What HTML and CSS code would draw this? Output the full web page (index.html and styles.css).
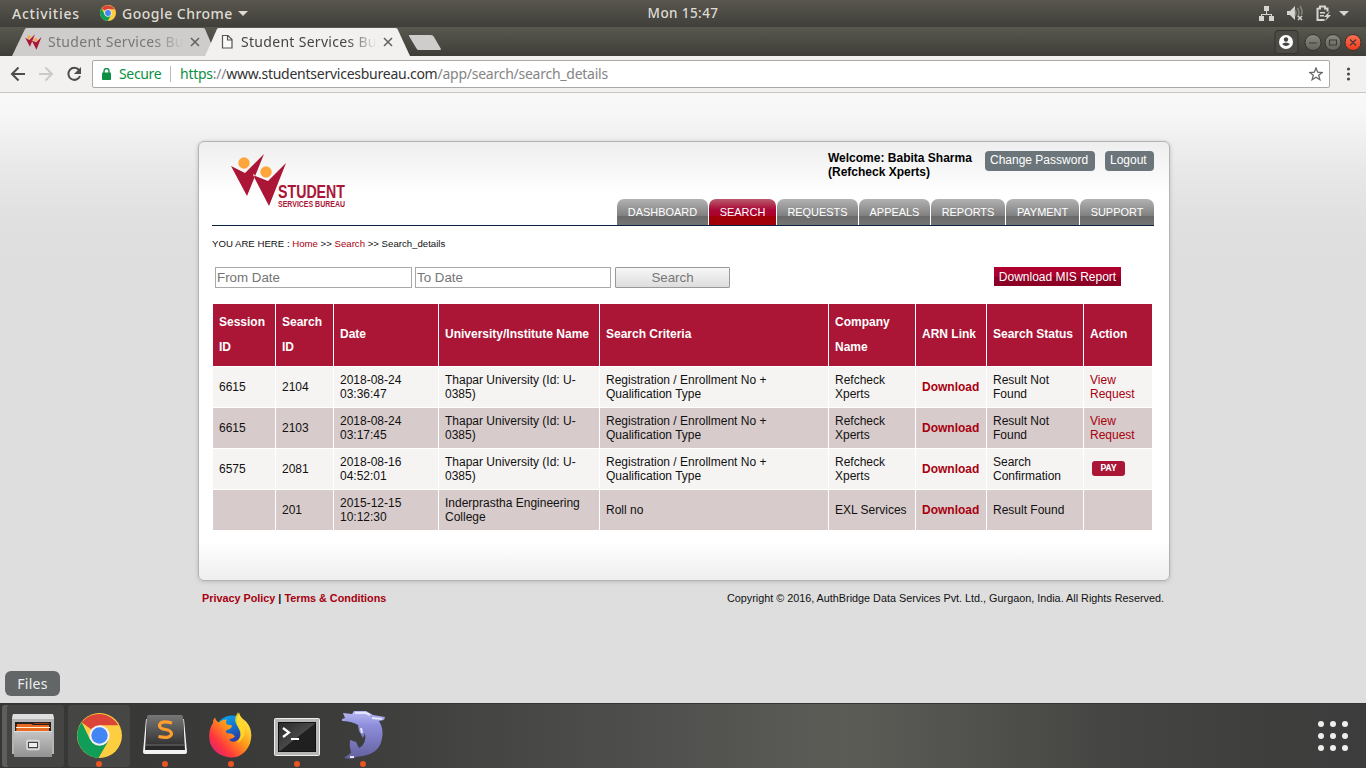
FILE: index.html
```html
<!DOCTYPE html>
<html lang="en">
<head>
<meta charset="utf-8">
<title>Student Services Bureau</title>
<link rel="stylesheet" href="styles.css">
</head>
<body>
<svg width="0" height="0" class="defs" aria-hidden="true">
  <defs>
    <symbol id="chrome" viewBox="0 0 44 44">
      <circle cx="22" cy="22" r="22" fill="#ffcd40"/>
      <path d="M22 22 4.500 9A22 22 0 0 1 40.500 12H22Z" fill="#db4437"/>
      <path d="M4.500 9A22 22 0 0 0 21 44L30.500 27.500 22 22 13 26.500Z" fill="#0f9d58"/>
      <circle cx="22" cy="22" r="10" fill="#f1f1f1"/>
      <circle cx="22" cy="22" r="8" fill="#4285f4"/>
    </symbol>
    <symbol id="figures" viewBox="0 0 56 54">
      <path d="M0 13 14 20 33 1 16 43Z" fill="#ab1536"/>
      <path d="M22 22 37 28 55 10 38 53Z" fill="#ab1536"/>
      <circle cx="13" cy="10" r="5.700" fill="#fea63c"/>
      <circle cx="35" cy="19" r="5.700" fill="#fea63c"/>
      <path d="M22 21l2 1-1 2Z" fill="#f6f6f6"/>
    </symbol>
  </defs>
</svg>

<header class="topbar">
  <span class="activities">Activities</span>
  <svg class="top-chrome" width="16" height="16"><use href="#chrome"/></svg>
  <span class="appname">Google Chrome</span>
  <i class="caret"></i>
  <span class="clock">Mon 15:47</span>
  <svg class="tray" width="94" height="18" viewBox="0 0 94 18" fill="#d5d4d0">
    <path d="M6 2h5v5H6zM1 12h5v5H1zM11 12h5v5h-5zM8 7h1v3h5v2h-1v-1H4v1H3v-2h5z"/>
    <path d="M29 7h3l5-5v14l-5-5h-3z"/>
    <g fill="none" stroke="#85837c" stroke-width="1.500"><path d="M37 6q2 3 0 6M39.500 4q3 5 0 9M42 2q3 5 1.500 9"/></g>
    <path d="m40 12 4 4m0-4-4 4" stroke="#d5d4d0" stroke-width="1.500"/>
    <path d="M59.500 4.500h2.500v-2h5v2h2.500v3M59.500 4v12h7" fill="none" stroke="#d5d4d0" stroke-width="2"/>
    <path d="M62 8h5v1.500h-5zM62 11h4v1.500h-4zM72 7l-6 6h3l-2 4 6-6h-3z"/>
    <path d="M81 7h10l-5 5z"/>
  </svg>
</header>

<div class="tabstrip">
  <svg class="tab-shapes" width="450" height="29" viewBox="0 0 450 29">
    <path d="M12 29 25 2q.500-1 2-1H203q1.500 0 2 1l6 14-5 13Z" fill="#cfcdcb"/>
    <path d="M205 29 217 2q.500-1 2-1H395q2 0 2.500 1L410 29Z" fill="#f2f1f0"/>
    <path d="M409 8H431q2 0 3 2l7 12q0 1-1 1H419q-2 0-2.500-1.500L409 9Z" fill="#cfcdcb"/>
    <path d="m191 11 8 8m0-8-8 8M384 11l8 8m0-8-8 8" stroke="#646464" stroke-width="1.600"/>
    <path d="M222.500 8.500h5.500l4 4v8.500h-9.500ZM227.500 8.500V13h4.500" fill="#fafafa" stroke="#555" stroke-width="1.200"/>
  </svg>
  <svg class="favicon" width="17" height="16"><use href="#figures"/></svg>
  <span class="tab-title inactive">Student Services Bu</span>
  <span class="tab-title active">Student Services Bu</span>
  <svg class="window-buttons" width="94" height="28" viewBox="0 0 94 28">
    <defs>
      <linearGradient id="grey-button" x2="0" y2="1"><stop stop-color="#8b8980"/><stop offset="1" stop-color="#63625b"/></linearGradient>
      <linearGradient id="red-button" x2="0" y2="1"><stop stop-color="#ff7153"/><stop offset="1" stop-color="#f0391d"/></linearGradient>
    </defs>
    <rect x="3" y="2.500" width="23" height="23" rx="3" fill="#4c4b45" stroke="#34342f"/>
    <circle cx="14" cy="14" r="7" fill="#fff"/>
    <circle cx="14" cy="11.500" r="2.200" fill="#44433d"/><path d="M10 16q4-3 8 0-4 4-8 0Z" fill="#44433d"/>
    <g stroke="#34342f"><circle cx="41" cy="14.500" r="8" fill="url(#grey-button)"/><circle cx="61" cy="14.500" r="8" fill="url(#grey-button)"/><circle cx="81" cy="14.500" r="8" fill="url(#red-button)"/></g>
    <path d="M37 15h8M57.500 12h7v5h-7zM78 11.500l6 6m0-6-6 6" fill="none" stroke="#3d3c36" stroke-width="1.200"/>
  </svg>
</div>

<nav class="toolbar">
  <svg class="nav-icons" width="92" height="36" viewBox="0 0 92 36" fill="none" stroke-width="2">
    <path d="M25 18H12m6.500-6.500L12 18l6.500 6.500" stroke="#4c4c4c"/>
    <path d="M39 18h13m-6.500-6.500L52 18l-6.500 6.500" stroke="#cbcac9"/>
    <path d="M79 14A6 6 0 1 0 80 20" stroke="#4c4c4c"/><path d="M81 11v7h-7z" fill="#4c4c4c"/>
  </svg>
  <div class="address">
    <svg class="lock" width="9" height="12" viewBox="0 0 9 12"><path d="M2 5V3a2.500 2.500 0 0 1 5 0v2" fill="none" stroke="#0b9043" stroke-width="1.400"/><rect y="4.500" width="9" height="7.500" rx=".8" fill="#0b9043"/></svg>
    <span class="secure">Secure</span><i class="divider"></i>
    <span class="url"><span class="scheme">https</span><span class="dim">://</span>www.studentservicesbureau.com<span class="dim">/app/search/search_details</span></span>
    <svg class="star" width="14" height="14" viewBox="0 0 14 14"><path d="m7 1 1.700 4.200 4.500.3-3.500 2.800 1.200 4.400L7 10.300l-3.900 2.400 1.200-4.400L.8 5.500l4.500-.3Z" fill="none" stroke="#666" stroke-width="1.300"/></svg>
  </div>
  <svg width="36" height="36" viewBox="0 0 36 36" fill="#4c4c4c"><circle cx="18.500" cy="13" r="1.600"/><circle cx="18.500" cy="18" r="1.600"/><circle cx="18.500" cy="23" r="1.600"/></svg>
</nav>

<main class="page">
  <section class="panel">
    <div class="masthead">
      <div class="logo">
        <svg width="56" height="54"><use href="#figures"/></svg>
        <svg class="wordmark" width="72" height="29" viewBox="0 0 72 29">
          <text class="logo-large" x="1" y="16" textLength="67" lengthAdjust="spacingAndGlyphs">STUDENT</text>
          <text class="logo-small" x="1" y="25" textLength="67" lengthAdjust="spacingAndGlyphs">SERVICES BUREAU</text>
        </svg>
      </div>
      <div class="account">
        <div class="welcome">Welcome: Babita Sharma<br>(Refcheck Xperts)</div>
        <a class="account-button change">Change Password</a>
        <a class="account-button logout">Logout</a>
      </div>
      <div class="menu">
        <a class="dashboard">DASHBOARD</a><a class="search current">SEARCH</a><a class="requests">REQUESTS</a><a class="appeals">APPEALS</a><a class="reports">REPORTS</a><a class="payment">PAYMENT</a><a class="support">SUPPORT</a>
      </div>
    </div>
    <div class="crumbs">YOU ARE HERE : <a>Home</a> &gt;&gt; <a>Search</a> &gt;&gt; Search_details</div>
    <div class="filters">
      <input class="from" type="text" placeholder="From Date"><input class="to" type="text" placeholder="To Date"><button class="search-button">Search</button>
      <a class="report">Download MIS Report</a>
    </div>
    <table class="results">
      <colgroup><col class="c1"><col class="c2"><col class="c3"><col class="c4"><col class="c5"><col class="c6"><col class="c7"><col class="c8"><col class="c9"></colgroup>
      <thead><tr><th>Session<br>ID</th><th>Search<br>ID</th><th class="single">Date</th><th class="single">University/Institute Name</th><th class="single">Search Criteria</th><th>Company<br>Name</th><th class="single">ARN Link</th><th class="single">Search Status</th><th class="single">Action</th></tr></thead>
      <tbody>
        <tr><td>6615</td><td>2104</td><td>2018-08-24<br>03:36:47</td><td>Thapar University (Id: U-<br>0385)</td><td>Registration / Enrollment No +<br>Qualification Type</td><td>Refcheck<br>Xperts</td><td><a class="download">Download</a></td><td>Result Not<br>Found</td><td><a>View<br>Request</a></td></tr>
        <tr><td>6615</td><td>2103</td><td>2018-08-24<br>03:17:45</td><td>Thapar University (Id: U-<br>0385)</td><td>Registration / Enrollment No +<br>Qualification Type</td><td>Refcheck<br>Xperts</td><td><a class="download">Download</a></td><td>Result Not<br>Found</td><td><a>View<br>Request</a></td></tr>
        <tr><td>6575</td><td>2081</td><td>2018-08-16<br>04:52:01</td><td>Thapar University (Id: U-<br>0385)</td><td>Registration / Enrollment No +<br>Qualification Type</td><td>Refcheck<br>Xperts</td><td><a class="download">Download</a></td><td>Search<br>Confirmation</td><td><span class="pay">PAY</span></td></tr>
        <tr><td></td><td>201</td><td>2015-12-15<br>10:12:30</td><td>Inderprastha Engineering<br>College</td><td>Roll no</td><td>EXL Services</td><td><a class="download">Download</a></td><td>Result Found</td><td></td></tr>
      </tbody>
    </table>
  </section>
  <footer class="footer"><b><a>Privacy Policy</a> | <a>Terms &amp; Conditions</a></b><span>Copyright © 2016, AuthBridge Data Services Pvt. Ltd., Gurgaon, India. All Rights Reserved.</span></footer>
  <div class="tooltip">Files</div>
</main>

<div class="dock">
  <div class="dock-item files focused">
    <svg width="46" height="50" viewBox="0 0 46 50">
      <defs><linearGradient id="cabinet" x2="0" y2="1"><stop stop-color="#c5c5c5"/><stop offset="1" stop-color="#929292"/></linearGradient></defs>
      <path d="M3 3h40l1 5v35H2V8z" fill="#b5b5b5"/><path d="M3 3h40l1 5H2z" fill="#dedede"/>
      <rect x="5" y="11" width="36" height="10" fill="#222"/><path d="M7 13h14l2 1h16v7H6z" fill="#e76a20"/><path d="M24 12.500h15" stroke="#a63912"/><path d="M6 16.500h34" stroke="#fff2d9"/>
      <path d="M4 20h38v26H4z" fill="url(#cabinet)"/><path d="M4 20.500h38" stroke="#ddd"/>
      <rect x="17" y="29.500" width="12" height="9" rx="1" fill="#aaa" stroke="#ddd" stroke-width="1.500"/><rect x="18.500" y="31.500" width="9" height="5" fill="#eee" stroke="#444" stroke-width="1"/>
    </svg>
  </div>
  <div class="dock-item focused running"><svg width="45" height="45"><use href="#chrome"/></svg></div>
  <div class="dock-item running">
    <svg width="46" height="50" viewBox="0 0 46 50">
      <defs><linearGradient id="keycap" x2="0" y2="1"><stop stop-color="#777"/><stop offset="1" stop-color="#363636"/></linearGradient></defs>
      <path d="M4 8h38l3 33q0 2-2 2H3q-2 0-2-2z" fill="#f2f2f2"/><path d="M5 6h36l2 33H3z" fill="#292929"/><path d="M5 6q0-2 2-2h32q2 0 2 2l1 27H4z" fill="url(#keycap)"/><path d="M4 34h38" stroke="#777"/>
      <path d="M30 12q-11-3-12.500 2-.5 3.500 6 4.500 6 1 6 4.500-1 5-13 2.500" fill="none" stroke="#ff9d2e" stroke-width="3.200"/>
    </svg>
  </div>
  <div class="dock-item running">
    <svg width="46" height="50" viewBox="0 0 46 50">
      <defs>
        <linearGradient id="flame" x1="1" y1="0" x2="0" y2="1"><stop offset=".1" stop-color="#fff044"/><stop offset=".45" stop-color="#ff9618"/><stop offset=".72" stop-color="#ff363f"/><stop offset="1" stop-color="#cf168b"/></linearGradient>
        <linearGradient id="globe" x2=".5" y2="1"><stop stop-color="#00b5ff"/><stop offset="1" stop-color="#302692"/></linearGradient>
      </defs>
      <circle cx="24" cy="21" r="16.500" fill="url(#globe)"/>
      <path d="M7 6.500q1 4 4 5 3-3 8-3-2 3 0 5l5 1q0 3-6 5-1 2 2 3 4-1 7 3-2 2-6 3 3 4 8 1 7-5 2-12-5-8 0-16 1 5 7 9 8 9 4 22-6 14-19 14Q7 45 2 32-.5 20 5 12q0-4 2-5.500Z" fill="url(#flame)"/>
      <path d="M30 1q-6 8 0 15 5 8-1 16 10-5 7-17-5-6-6-14Z" fill="#ffe226" opacity=".7"/>
    </svg>
  </div>
  <div class="dock-item running">
    <svg width="46" height="50" viewBox="0 0 46 50">
      <defs><linearGradient id="screen" x2="1" y2="1"><stop stop-color="#292929"/><stop offset=".5" stop-color="#484848"/><stop offset=".52" stop-color="#202020"/></linearGradient></defs>
      <rect x=".5" y="7.500" width="45" height="37" rx="1" fill="#b7b7b7" stroke="#eee"/><rect x="4.500" y="11.500" width="37" height="29" fill="url(#screen)" stroke="#111"/>
      <path d="m9 17 6 4.500-6 4.500M17 28h8" fill="none" stroke="#fff" stroke-width="2.200"/>
    </svg>
  </div>
  <div class="dock-item running">
    <svg width="46" height="50" viewBox="0 0 46 50">
      <defs><linearGradient id="dolphin" x2="0" y2="1"><stop stop-color="#b9b9f4"/><stop offset=".3" stop-color="#8f8edc"/><stop offset="1" stop-color="#63609d"/></linearGradient></defs>
      <path d="M3 2 12 3 14 0H26l7 4 12 2-1 3-5 1q5 8 3 17-2 15-19 18l-7 1-4 2-8-1 7-5q-2-7-1-13l6 2 3 6q8-4 6-15l-2 5-4-7-1-6q-7-4-16-4V8l3-1Z" fill="url(#dolphin)"/>
      <path d="M15 2h11l4 2M32 7l10 1M21 17l1 5M10 46h4" fill="none" stroke="#e4e4ff" stroke-width="2"/>
    </svg>
  </div>
  <svg class="apps" width="32" height="32" viewBox="0 0 32 32" fill="#eeeeec"><circle cx="4" cy="4" r="3"/><circle cx="16" cy="4" r="3"/><circle cx="28" cy="4" r="3"/><circle cx="4" cy="16" r="3"/><circle cx="16" cy="16" r="3"/><circle cx="28" cy="16" r="3"/><circle cx="4" cy="28" r="3"/><circle cx="16" cy="28" r="3"/><circle cx="28" cy="28" r="3"/></svg>
</div>
</body>
</html>
```
FILE: styles.css
```css
* { box-sizing: border-box; }
body { margin: 0; width: 1366px; height: 768px; overflow: hidden; display: flex; flex-direction: column; font-family: "Liberation Sans", Arial, sans-serif; }
.defs { position: absolute; }
svg { display: block; flex: none; }
a { color: #a8000f; text-decoration: none; }

.topbar { height: 27px; flex: none; display: flex; align-items: center; position: relative; padding: 0 0 1px 12px; background: linear-gradient(#58564e, #403f3a); color: #dfdbd2; font: 500 14px "Noto Sans", sans-serif; white-space: nowrap; }
.activities { width: 88px; letter-spacing: .75px; }
.top-chrome { margin-right: 6px; }
.appname { width: 112px; letter-spacing: .48px; }
.caret { margin-left: 4px; border: 5px solid transparent; border-top-color: #dfdbd2; border-bottom: 0; }
.clock { position: absolute; left: 0; right: 0; text-align: center; font-size: 13.5px; letter-spacing: .4px; }
.tray { margin-left: auto; margin-right: 14px; }

.tabstrip { height: 29px; flex: none; display: flex; align-items: center; position: relative; background: linear-gradient(#59584f, #3e3d38); font: 14px "Noto Sans", sans-serif; padding-left: 25px; }
.tab-shapes { position: absolute; left: 0; top: 0; }
.favicon { position: relative; margin-right: 6px; }
.tab-title { position: relative; width: 136px; overflow: hidden; white-space: nowrap; letter-spacing: .3px; }
.inactive { color: #777; margin-right: 57px; -webkit-mask-image: linear-gradient(90deg, #000 78%, transparent); }
.active { color: #454545; -webkit-mask-image: linear-gradient(90deg, #000 78%, transparent); }
.window-buttons { margin-left: auto; }

.toolbar { height: 37px; flex: none; display: flex; background: #f2f1f0; border-bottom: 1px solid #c7c6c5; }
.address { width: 1238px; height: 28px; margin-top: 4px; border: 1px solid #aaa9a8; border-radius: 2px; background: #fff; display: flex; align-items: center; padding: 0 6px 0 9px; font: 14px "Noto Sans", sans-serif; color: #333; white-space: nowrap; }
.lock { margin-right: 8px; }
.secure { width: 43px; color: #0b9043; letter-spacing: -.35px; padding-bottom: 2px; }
.divider { height: 16px; width: 1px; background: #bbb; margin: 0 9px 0 8px; }
.scheme { color: #0b9043; }
.dim { color: #858585; }
.url { letter-spacing: -.25px; padding-bottom: 2px; }
.star { margin-left: auto; }

.page { height: 610px; flex: none; position: relative; padding-top: 48px; background: linear-gradient(#f9f9f9, #f7f7f7 18px, #e9e9e9 72px, #e1e1e1 120px, #dedede 165px); }
.panel { width: 972px; height: 440px; margin-left: 198px; border: 1px solid #b3b3b3; border-radius: 6px; padding: 0 15px 0 13px; background: linear-gradient(#eee, #fff 52px, #fff 400px, #eee 439px); box-shadow: 0 1px 4px #bdbdbd; }
.masthead { height: 84px; position: relative; border-bottom: 1px solid #0b2340; }
.logo { position: absolute; left: 19px; top: 11px; display: flex; }
.wordmark { margin: 29px 0 0 -10px; }
.logo-large, .logo-small { font-family: "Liberation Sans", Arial, sans-serif; font-weight: bold; fill: #ab1536; }
.logo-large { font-size: 18px; }
.logo-small { font-size: 8.5px; }
.account { display: flex; padding: 9px 0 0 616px; font-size: 12px; line-height: 14px; }
.welcome { width: 157px; font-weight: bold; white-space: nowrap; }
.account-button { height: 20px; padding: 2px 5px; border-radius: 4px; background: #6c757a; color: #fff; white-space: nowrap; }
.change { width: 110px; margin-right: 10px; }
.logout { width: 49px; }
.menu { position: absolute; right: 0; bottom: 0; display: flex; gap: 1px; }
.menu a { height: 26px; line-height: 26px; text-align: center; font-size: 10.95px; color: #fff; border-radius: 7px 7px 0 0; background: linear-gradient(#b2b2b2, #808080 64%, #6a6a6a 66%, #747474); }
.menu .current { background: linear-gradient(#b95c6b, #aa0838 42%, #ad0027 64%, #a20008 66%); }
.dashboard { width: 91px; } .menu .search { width: 67px; } .requests { width: 81px; } .appeals { width: 71px; } .reports { width: 74px; } .payment { width: 73px; } .support { width: 74px; }
.crumbs { height: 41px; padding-top: 12px; font-size: 9.63px; line-height: 12px; color: #111; }
.filters { height: 36px; display: flex; padding-left: 3px; }
.filters input { height: 21px; border: 1px solid #a9a9a9; padding: 1px; font: 13.333px "Liberation Sans", Arial, sans-serif; background: #fff; }
.filters input::placeholder { color: #757575; opacity: 1; }
.from { width: 197px; margin-right: 3px; } .to { width: 196px; margin-right: 4px; }
.search-button { width: 115px; height: 21px; padding: 0; border: 1px solid #999; border-radius: 1px; background: linear-gradient(#f7f7f7, #ddd); color: #777; font: 13.333px "Liberation Sans", Arial, sans-serif; }
.report { width: 127px; height: 19px; margin-left: 264px; background: linear-gradient(#b00030, #aa002c 50%, #8b0024 55%, #8b0024); color: #fff; text-align: center; font-size: 12px; line-height: 20px; white-space: nowrap; }

.results { table-layout: fixed; width: 941px; border-spacing: 1px; font-size: 12px; line-height: 14px; color: #111; }
.c1 { width: 62px; } .c2 { width: 57px; } .c3 { width: 104px; } .c4 { width: 160px; } .c5 { width: 228px; } .c6 { width: 86px; } .c7 { width: 70px; } .c8 { width: 96px; } .c9 { width: 68px; }
.results th { height: 62px; padding: 0 0 0 6px; text-align: left; background: #ab1536; color: #fff; line-height: 25px; white-space: nowrap; }
.results th.single { padding-bottom: 2px; }
.results td { height: 40px; padding: 0 0 0 6px; background: #f6f4f3; white-space: nowrap; }
.results tr:nth-child(even) td { background: #d7cbcb; }
.download { font-weight: bold; }
.pay { display: block; width: 33px; height: 15px; margin: -1px 0 0 2px; border-radius: 3px; background: #ab1536; color: #fff; text-align: center; font: bold 9px/15px Roboto, sans-serif; }
.footer { display: flex; justify-content: space-between; margin: 10px 202px 0; font-size: 10.82px; line-height: 14px; color: #111; }
.tooltip { position: absolute; left: 5px; bottom: 7px; width: 55px; height: 25px; border-radius: 6px; background: #626666; color: #eee; text-align: center; font: 14px/25px "Noto Sans", sans-serif; letter-spacing: .3px; }

.dock { height: 65px; flex: none; display: flex; align-items: center; gap: 4px; padding-left: 2px; background: linear-gradient(90deg, #363734, #3c3d3b 25%, #51524f 50%, #5c5c57 62%, #444542 82%, #3b3c3b); box-shadow: inset 0 1px #343832; }
.dock-item { width: 62px; height: 62px; display: flex; align-items: center; justify-content: center; position: relative; border-radius: 3px; }
.focused { background: #ffffff12; }
.files { box-shadow: inset 5px 0 #ffffff24; }
.running::after { content: ""; position: absolute; left: 28px; bottom: 0; width: 6px; height: 6px; border-radius: 50%; background: #e95420; }
.apps { margin: 0 17px 0 auto; }
```
